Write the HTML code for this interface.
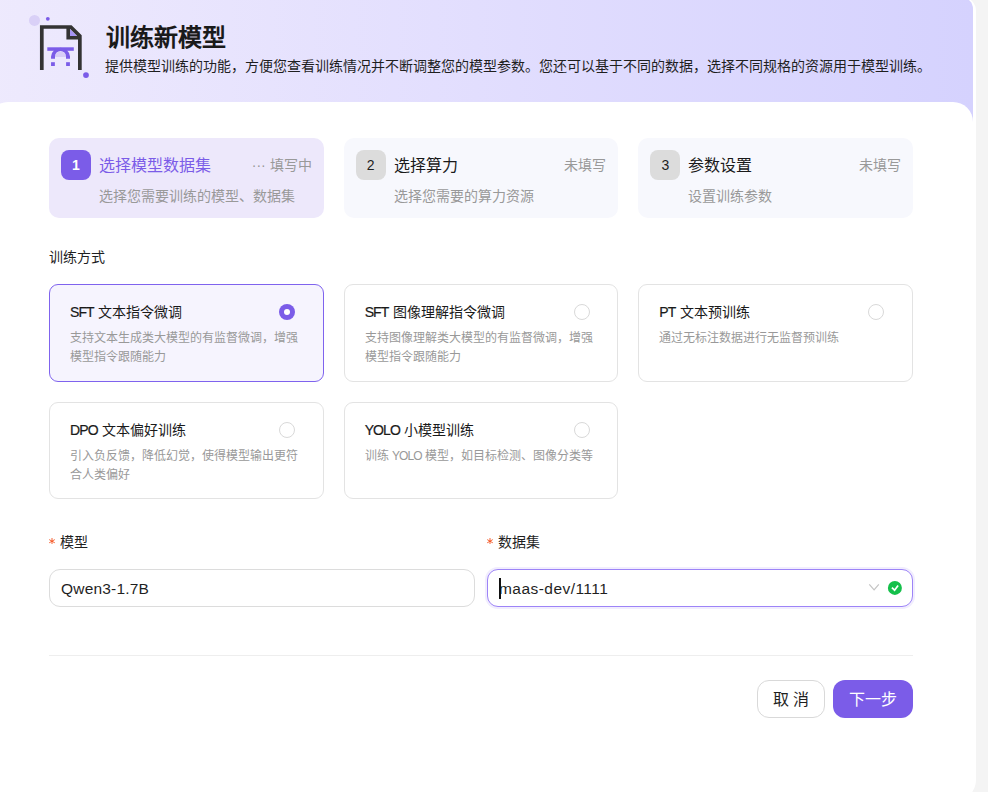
<!DOCTYPE html>
<html lang="zh-CN"><head><meta charset="utf-8">
<style>
*{box-sizing:border-box;margin:0;padding:0}
html,body{width:988px;height:792px;overflow:hidden;background:#f4f4f4;font-family:"Liberation Sans",sans-serif;color:#1f1f1f}
.outer{position:absolute;left:-20px;top:-3px;width:996px;height:803px;background:#fff;border-radius:14px 14px 20px 20px;overflow:hidden}
.header{position:absolute;left:0;top:0;width:993px;height:140px;background:linear-gradient(90deg,#eeeafd 0%,#e2defe 50%,#d5d2fe 100%);border-radius:0 12px 0 0}
.panel{position:absolute;left:8px;top:105px;width:985px;height:720px;background:#fff;border-radius:20px 20px 0 0}
.abs{position:absolute}
.title{position:absolute;left:106px;top:22px;font-size:24px;font-weight:bold;color:#1a1a1a;line-height:32px;white-space:nowrap}
.sub{position:absolute;left:105px;top:56px;font-size:14px;color:#1f1f1f;line-height:20px;white-space:nowrap}
.step{position:absolute;top:138px;width:274.67px;height:80px;border-radius:10px;background:#f7f8fd}
.step.active{background:#ede8fb}
.badge{position:absolute;left:12px;top:12px;width:30px;height:30px;border-radius:8px;background:#dcdcdc;color:#1f1f1f;font-size:14px;text-align:center;line-height:30px}
.active .badge{background:#7b5ce8;color:#fff;font-weight:bold}
.stitle{position:absolute;left:50px;top:16px;font-size:16px;line-height:24px;color:#1a1a1a;font-weight:500;white-space:nowrap}
.active .stitle{color:#7b5ce8}
.sstat{position:absolute;right:12px;top:16px;font-size:14px;line-height:22px;color:#999;white-space:nowrap}
.sdesc{position:absolute;left:50px;top:46.5px;font-size:14px;line-height:22px;color:#999;white-space:nowrap}
.label{position:absolute;font-size:14px;line-height:20px;color:#1f1f1f;white-space:nowrap}
.opt{position:absolute;width:274.67px;border:1px solid #e3e3e3;border-radius:9px;background:#fff}
.opt.sel{border-color:#7f63ee;background:#f6f4fe}
.otitle{position:absolute;left:20px;top:16px;font-size:14px;line-height:22px;font-weight:500;color:#1a1a1a;white-space:nowrap}
.odesc{position:absolute;left:20px;top:43.5px;width:232px;font-size:12px;line-height:19px;color:#999}
.lt{letter-spacing:-0.9px;-webkit-text-stroke:0.2px currentColor;margin-right:0.3px}
.radio{position:absolute;left:229px;top:19px;width:16px;height:16px;border-radius:50%;border:1px solid #d9d9d9;background:#fff}
.sel .radio{border:none;background:#7b5ce8}
.sel .radio:after{content:"";position:absolute;left:5px;top:5px;width:6px;height:6px;border-radius:50%;background:#fff}
.input{position:absolute;top:569px;height:38px;border:1px solid #dcdcdc;border-radius:11px;background:#fff}
.input .val{position:absolute;left:11px;top:8.5px;font-size:15.5px;line-height:20px;color:#1f1f1f;white-space:nowrap}
.btn{position:absolute;top:680px;height:38px;border-radius:12px;font-size:16px;line-height:39px;text-align:center}
</style></head><body>
<div class="outer">
  <div class="header"></div>
  <div class="panel"></div>
</div>

<!-- header icon -->
<svg class="abs" style="left:0;top:0" width="100" height="90" viewBox="0 0 100 90">
  <circle cx="34.5" cy="20.4" r="5.5" fill="#d9d0f7"/>
  <circle cx="47.8" cy="18.8" r="1.9" fill="#7b5ce8"/>
  <path d="M70 29 V36 H77.2 Z" fill="#a593f4"/>
  <path d="M41.8 70 V27 H70.8 L79.85 36.05 V70" fill="none" stroke="#333" stroke-width="3.7" stroke-linejoin="miter"/>
  <path d="M68.2 27 V37.7 H79.85" fill="none" stroke="#333" stroke-width="3.6"/>
  <rect x="47.3" y="47.3" width="26.5" height="3.5" fill="#7b5ce8"/>
  <path d="M55 56.9 A5.5 5.5 0 0 1 66 56.9 Z" fill="#d8cdf7"/>
  <path d="M51.05 58.8 V56.5 A9.5 9.5 0 0 1 70 56.5 V58.8 H66 V56.5 A5.5 5.5 0 0 0 55 56.5 V58.8 Z" fill="#7b5ce8"/>
  <rect x="51.05" y="62.2" width="3.8" height="3.8" fill="#7b5ce8"/>
  <rect x="66.1" y="62.2" width="3.8" height="3.8" fill="#7b5ce8"/>
  <circle cx="86" cy="75.1" r="2.9" fill="#7b5ce8"/>
</svg>
<div class="title">训练新模型</div>
<div class="sub">提供模型训练的功能，方便您查看训练情况并不断调整您的模型参数。您还可以基于不同的数据，选择不同规格的资源用于模型训练。</div>

<!-- steps -->
<div class="step active" style="left:49px">
  <div class="badge">1</div>
  <div class="stitle">选择模型数据集</div>
  <div class="sstat">··· 填写中</div>
  <div class="sdesc">选择您需要训练的模型、数据集</div>
</div>
<div class="step" style="left:343.67px;width:274.67px">
  <div class="badge">2</div>
  <div class="stitle">选择算力</div>
  <div class="sstat">未填写</div>
  <div class="sdesc">选择您需要的算力资源</div>
</div>
<div class="step" style="left:638.33px;width:274.67px">
  <div class="badge">3</div>
  <div class="stitle">参数设置</div>
  <div class="sstat">未填写</div>
  <div class="sdesc">设置训练参数</div>
</div>

<div class="label" style="left:49px;top:247px">训练方式</div>

<div class="opt sel" style="left:49px;top:284px;height:98px">
  <div class="otitle"><span class="lt">SFT</span> 文本指令微调</div><div class="radio"></div>
  <div class="odesc">支持文本生成类大模型的有监督微调，增强模型指令跟随能力</div>
</div>
<div class="opt" style="left:343.67px;top:284px;height:98px">
  <div class="otitle"><span class="lt">SFT</span> 图像理解指令微调</div><div class="radio"></div>
  <div class="odesc">支持图像理解类大模型的有监督微调，增强模型指令跟随能力</div>
</div>
<div class="opt" style="left:638.33px;top:284px;height:98px">
  <div class="otitle"><span class="lt">PT</span> 文本预训练</div><div class="radio"></div>
  <div class="odesc">通过无标注数据进行无监督预训练</div>
</div>
<div class="opt" style="left:49px;top:402px;height:97px">
  <div class="otitle"><span class="lt">DPO</span> 文本偏好训练</div><div class="radio"></div>
  <div class="odesc">引入负反馈，降低幻觉，使得模型输出更符合人类偏好</div>
</div>
<div class="opt" style="left:343.67px;top:402px;height:97px">
  <div class="otitle"><span class="lt">YOLO</span> 小模型训练</div><div class="radio"></div>
  <div class="odesc">训练 <span style="letter-spacing:-0.9px">YOLO</span> 模型，如目标检测、图像分类等</div>
</div>

<div class="label" style="left:60px;top:532px"><svg class="abs" style="left:-10.6px;top:5.8px" width="6" height="6.4" viewBox="0 0 6 6.4"><path d="M3 0V6.4M0.2 1.6L5.8 4.8M0.2 4.8L5.8 1.6" stroke="#f4511e" stroke-width="0.9"/></svg>模型</div>
<div class="label" style="left:498px;top:532px"><svg class="abs" style="left:-10.6px;top:5.8px" width="6" height="6.4" viewBox="0 0 6 6.4"><path d="M3 0V6.4M0.2 1.6L5.8 4.8M0.2 4.8L5.8 1.6" stroke="#f4511e" stroke-width="0.9"/></svg>数据集</div>

<div class="input" style="left:49px;width:426px"><div class="val" style="letter-spacing:0.2px">Qwen3-1.7B</div></div>
<div class="input" style="left:487px;width:426px;border-color:#9d84f7;box-shadow:0 0 0 2px #f1edfe"><div class="val" style="letter-spacing:0.45px">maas-dev/1111</div>
  <div class="abs" style="left:11px;top:8px;width:1.5px;height:21px;background:#111"></div>
  <svg class="abs" style="left:-1px;top:-1px" width="426" height="38" viewBox="487 569 426 38">
    <path d="M869.3 584.4 L874.1 589.8 L878.8 584.4" fill="none" stroke="#c4c4c4" stroke-width="1.2"/>
    <circle cx="894.9" cy="587.9" r="7" fill="#15c04b"/>
    <path d="M891.9 587.6 L894.6 590.2 L898.1 585.6" fill="none" stroke="#fff" stroke-width="1.7"/>
  </svg></div>

<div class="abs" style="left:49px;top:655px;width:864px;height:1px;background:#eeeeee"></div>

<div class="btn" style="left:757px;width:68px;border:1px solid #d9d9d9;color:#1f1f1f;background:#fff;line-height:37px">取 消</div>
<div class="btn" style="left:833px;width:80px;background:#7b5ce8;color:#fff">下一步</div>
</body></html>
